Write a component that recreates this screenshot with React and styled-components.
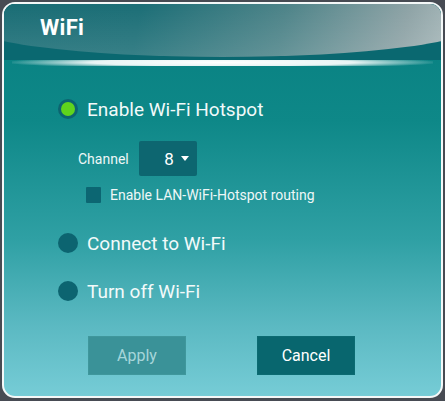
import React, { useState } from 'react';
import styled, { createGlobalStyle } from 'styled-components';

const GlobalStyle = createGlobalStyle`
  html, body {
    margin: 0;
    padding: 0;
    background: #474b53;
    font-family: Roboto, "Noto Sans", "Liberation Sans", sans-serif;
  }
`;

const Screen = styled.div`
  width: 445px;
  height: 401px;
  padding: 2px 2px 3px 2px;
  box-sizing: border-box;
`;

const Frame = styled.div`
  height: 100%;
  box-sizing: border-box;
  border: 2px solid #f4f8f8;
  border-radius: 13px;
  overflow: hidden;
  display: flex;
  flex-direction: column;
  background: linear-gradient(180deg, #077f80 0%, #0e8888 30%, #2fa0a4 60%, #5bb9c2 82%, #76ccd6 100%);
`;

const Header = styled.div`
  position: relative;
  height: 56px;
  flex-shrink: 0;
  background: #0a6870;
  overflow: hidden;

  &::before {
    content: '';
    position: absolute;
    left: -40px;
    right: -40px;
    top: -60px;
    height: 113px;
    border-radius: 0 0 50% 50% / 0 0 34px 34px;
    background:
      linear-gradient(180deg, rgba(255, 255, 255, 0) 55%, rgba(255, 255, 255, 0.12) 100%),
      linear-gradient(100deg, #1a6d75 0%, #1d6f77 35%, #4e8489 62%, #8ea3a6 85%, #b8c6c7 100%);
  }
`;

const Title = styled.h1`
  position: relative;
  margin: 0;
  padding: 11px 0 0 36px;
  font-size: 22px;
  font-weight: 700;
  color: #ffffff;
  letter-spacing: 0.3px;
`;

const Glow = styled.div`
  height: 6px;
  flex-shrink: 0;
  margin: 0 8px;
  background: radial-gradient(ellipse 52% 100% at 50% 40%, #ffffff 0%, #e8f4f4 60%, rgba(220, 240, 240, 0) 100%);
`;

const Body = styled.div`
  flex: 1;
  display: flex;
  flex-direction: column;
  padding: 32px 0 0 54px;
`;

const RadioRow = styled.div`
  display: flex;
  align-items: center;
  gap: 9px;
  height: 22px;
  cursor: pointer;
  margin-bottom: ${(p) => p.$gap || 0}px;
`;

const RadioDot = styled.span`
  width: 20px;
  height: 20px;
  border-radius: 50%;
  background: #0c6470;
  display: flex;
  align-items: center;
  justify-content: center;

  &::after {
    content: '';
    width: 14px;
    height: 14px;
    border-radius: 50%;
    background: ${(p) => (p.$on ? '#5fd41d' : 'transparent')};
  }
`;

const RadioLabel = styled.span`
  font-size: 19px;
  color: #f2fafa;
`;

const ChannelRow = styled.div`
  display: flex;
  align-items: center;
  gap: 10px;
  margin: 21px 0 0 20px;
`;

const SmallLabel = styled.span`
  font-size: 14px;
  color: #eef7f7;
`;

const Select = styled.div`
  width: 58px;
  height: 35px;
  box-sizing: border-box;
  background: #0d6670;
  border-radius: 2px;
  display: flex;
  align-items: center;
  justify-content: flex-end;
  gap: 7px;
  padding-right: 8px;
  color: #ffffff;
  font-size: 17px;
`;

const Caret = styled.span`
  width: 0;
  height: 0;
  border-left: 4px solid transparent;
  border-right: 4px solid transparent;
  border-top: 5px solid #ffffff;
`;

const CheckRow = styled.div`
  display: flex;
  align-items: center;
  gap: 9px;
  margin: 11px 0 29px 28px;
`;

const CheckBox = styled.span`
  width: 15px;
  height: 16px;
  background: #0c6672;
  border-radius: 1px;
`;

const CheckLabel = styled.span`
  font-size: 14px;
  color: #eef7f7;
`;

const Buttons = styled.div`
  display: flex;
  gap: 71px;
  margin: 34px 0 0 30px;
`;

const Button = styled.button`
  width: 98px;
  height: 39px;
  border: 1px solid ${(p) => (p.$disabled ? '#3f979c' : '#0b6b72')};
  border-radius: 0;
  background: ${(p) => (p.$disabled ? '#3a9298' : '#08666e')};
  color: ${(p) => (p.$disabled ? '#a6d6da' : '#ffffff')};
  font-family: inherit;
  font-size: 16px;
  cursor: ${(p) => (p.$disabled ? 'default' : 'pointer')};
`;

const options = [
  { id: 'hotspot', label: 'Enable Wi-Fi Hotspot' },
  { id: 'connect', label: 'Connect to Wi-Fi' },
  { id: 'off', label: 'Turn off Wi-Fi' },
];

export default function App() {
  const [mode, setMode] = useState('hotspot');

  return (
    <Screen>
      <GlobalStyle />
      <Frame>
        <Header>
          <Title>WiFi</Title>
        </Header>
        <Glow />
        <Body>
          <RadioRow onClick={() => setMode('hotspot')}>
            <RadioDot $on={mode === 'hotspot'} />
            <RadioLabel>{options[0].label}</RadioLabel>
          </RadioRow>
          <ChannelRow>
            <SmallLabel>Channel</SmallLabel>
            <Select>
              8
              <Caret />
            </Select>
          </ChannelRow>
          <CheckRow>
            <CheckBox />
            <CheckLabel>Enable LAN-WiFi-Hotspot routing</CheckLabel>
          </CheckRow>
          <RadioRow $gap={26} onClick={() => setMode('connect')}>
            <RadioDot $on={mode === 'connect'} />
            <RadioLabel>{options[1].label}</RadioLabel>
          </RadioRow>
          <RadioRow onClick={() => setMode('off')}>
            <RadioDot $on={mode === 'off'} />
            <RadioLabel>{options[2].label}</RadioLabel>
          </RadioRow>
          <Buttons>
            <Button $disabled>Apply</Button>
            <Button>Cancel</Button>
          </Buttons>
        </Body>
      </Frame>
    </Screen>
  );
}
